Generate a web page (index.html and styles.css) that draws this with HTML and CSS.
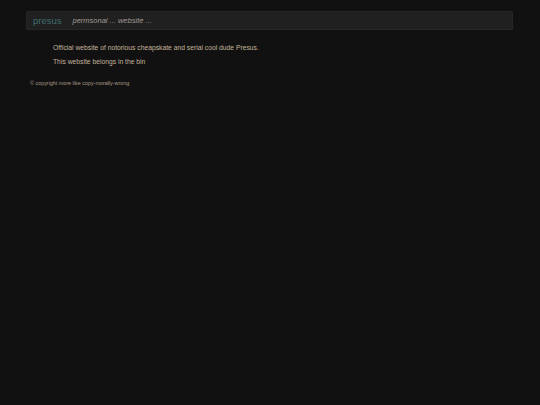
FILE: index.html
```html
<!DOCTYPE html>
<html>
<head>
    <title>presus</title>
    <meta charset="UTF-8">
    <link rel="stylesheet" href="styles.css">
</head>
<body>
    <div class="container">
        <div class="navbar">
            <span class="brand">presus</span>
            <span class="tagline">permsonal ... website ...</span>
        </div>

        <div class="content">
            <p>Official website of notorious cheapskate and serial cool dude Presus.</p>
            <p>This website belongs in the bin</p>
        </div>

        <div class="footer">&copy; copyright more like copy-morally-wrong</div>
    </div>
</body>
</html>
```

FILE: styles.css
```css
:root {
    --page-bg: #111111;
    --bar-bg: #202020;
    --bar-border: #262626;
    --brand-color: #3e6e6e;
    --tagline-color: #a09a94;
    --text-color: #c4b39c;
    --footer-color: #a89a88;
}

body {
    font-family: "Liberation Sans", Arial, sans-serif;
    background-color: var(--page-bg);
    margin: 0;
    padding: 0;
    color: var(--text-color);
}

.container {
    padding: 11px 27px 0 26px;
}

.navbar {
    display: flex;
    align-items: center;
    height: 17px;
    padding: 0 6px;
    background-color: var(--bar-bg);
    border: 1px solid var(--bar-border);
    border-radius: 1px;
}

.brand {
    font-size: 9.5px;
    color: var(--brand-color);
    margin-right: 11px;
}

.tagline {
    font-size: 7.5px;
    font-style: italic;
    color: var(--tagline-color);
}

.content {
    padding: 14px 0 0 27px;
}

.content p {
    font-size: 6.75px;
    margin: 0 0 7px;
    line-height: 7px;
}

.footer {
    font-size: 5.4px;
    color: var(--footer-color);
    padding: 8px 0 0 4px;
}
```
